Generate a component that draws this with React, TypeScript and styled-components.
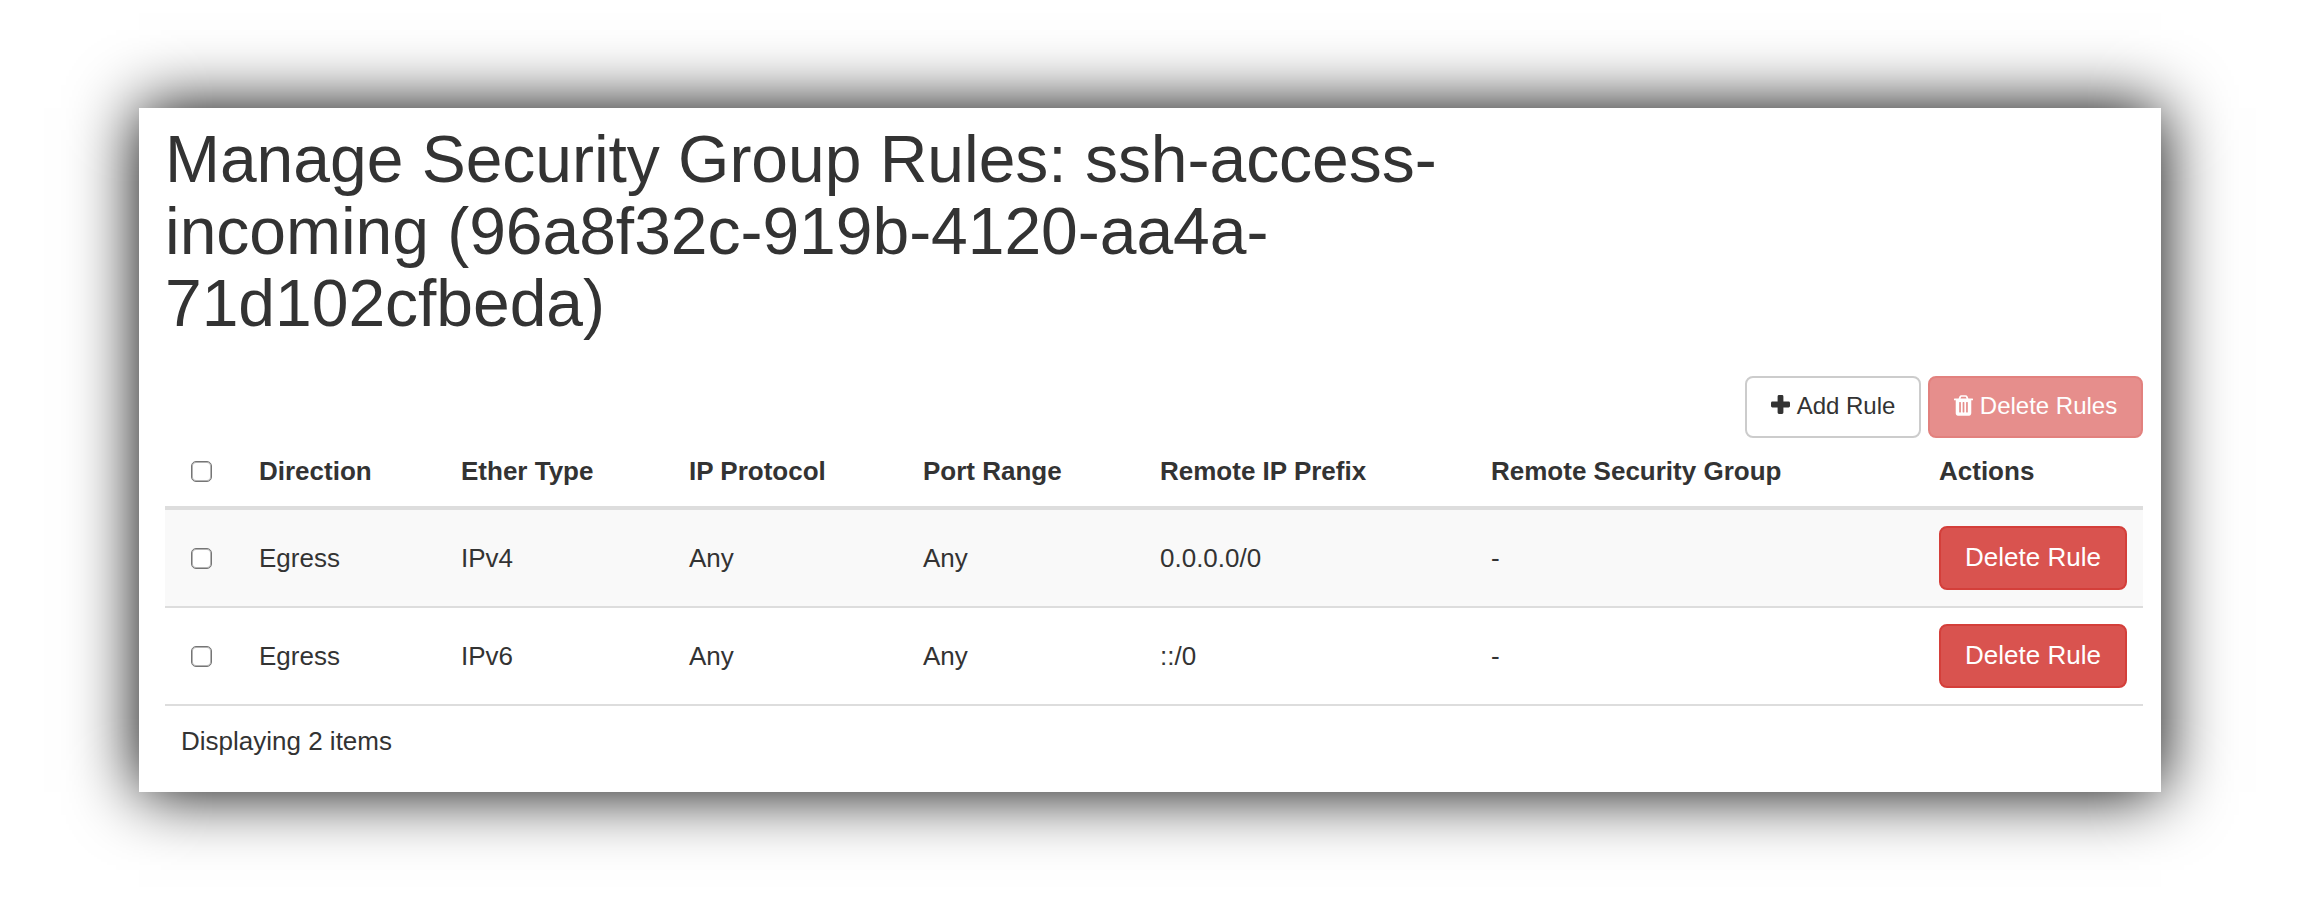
import React from 'react';
import styled, { createGlobalStyle, css } from 'styled-components';

const Global = createGlobalStyle`
  *, *::before, *::after { box-sizing: border-box; }
  html, body { margin: 0; background: #fff; }
  body {
    font-family: "Liberation Sans", Helvetica, Arial, sans-serif;
    font-size: 26px;
    line-height: 36px;
    color: #333;
  }
`;

const Page = styled.div`
  height: 900px;
  padding: 108px 139px;
  overflow: hidden;
`;

const Panel = styled.main`
  height: 684px;
  padding: 15px 18px 0 26px;
  background: #fff;
  box-shadow: 0 0 64px #000;
`;

const Title = styled.h1`
  width: 1320px;
  margin: 0;
  font-size: 66px;
  font-weight: 400;
  line-height: 72px;
  letter-spacing: -0.03px;
`;

const Toolbar = styled.div`
  display: flex;
  justify-content: flex-end;
  gap: 7px;
  height: 62px;
  margin-top: 37px;
`;

const danger = css`
  color: #fff;
  background: #d9534f;
  border-color: #d43f3a;
`;

const Button = styled.button<{ $danger?: boolean; $width: number; $height: number }>`
  display: flex;
  align-items: center;
  justify-content: center;
  gap: 7px;
  width: ${(p) => p.$width}px;
  height: ${(p) => p.$height}px;
  padding: 0 0 3px;
  font: inherit;
  font-size: ${(p) => (p.$height > 62 ? 26 : 24)}px;
  white-space: nowrap;
  color: #333;
  background: #fff;
  border: 2px solid #ccc;
  border-radius: 8px;
  ${(p) => p.$danger && danger}
  &:disabled { opacity: 0.65; }
`;

const Table = styled.table`
  width: 1978px;
  table-layout: fixed;
  border-collapse: separate;
  border-spacing: 0;
`;

const HeadCell = styled.th`
  height: 72px;
  padding: 0 16px 2px;
  text-align: left;
  font-weight: 700;
  white-space: nowrap;
  border-bottom: 4px solid #ddd;
`;

const Row = styled.tr<{ $striped: boolean }>`
  background: ${(p) => (p.$striped ? '#f9f9f9' : '#fff')};
`;

const Cell = styled.td`
  height: 98px;
  padding: 0 16px;
  white-space: nowrap;
  border-bottom: 2px solid #ddd;
`;

const Check = styled.input`
  display: block;
  appearance: none;
  width: 21px;
  height: 21px;
  margin: 0 0 0 10px;
  background: #fff;
  border: 1px solid #757575;
  border-radius: 5px;
  box-shadow: inset 0 0 0 1px #b4b4b4;
`;

const Footer = styled.footer`
  padding: 17px 16px;
`;

const PlusIcon = () => (
  <svg width="19" height="21" viewBox="0 0 19 21" fill="currentColor">
    <path d="M8 0h3q1.4 0 1.4 1.4v5.2h5.2q1.4 0 1.4 1.4v3q0 1.4-1.4 1.4h-5.2v5.2q0 1.4-1.4 1.4h-3q-1.4 0-1.4-1.4v-5.2h-5.2q-1.4 0-1.4-1.4v-3q0-1.4 1.4-1.4h5.2v-5.2q0-1.4 1.4-1.4z" />
  </svg>
);

const TrashIcon = () => (
  <svg width="19" height="21" viewBox="0 0 1408 1536" fill="currentColor">
    <path d="M512 1248V544q0-14-9-23t-23-9h-64q-14 0-23 9t-9 23v704q0 14 9 23t23 9h64q14 0 23-9t9-23zm256 0V544q0-14-9-23t-23-9h-64q-14 0-23 9t-9 23v704q0 14 9 23t23 9h64q14 0 23-9t9-23zm256 0V544q0-14-9-23t-23-9h-64q-14 0-23 9t-9 23v704q0 14 9 23t23 9h64q14 0 23-9t9-23zM480 256h448l-48-117q-7-9-17-11H546q-10 2-17 11zm928 32v64q0 14-9 23t-23 9h-96v948q0 83-47 143.500t-113 60.500H288q-66 0-113-58.500T128 1336V384H32q-14 0-23-9t-9-23v-64q0-14 9-23t23-9h309l70-167q15-37 54-63t79-26h320q40 0 79 26t54 63l70 167h309q14 0 23 9t9 23z" />
  </svg>
);

const columnWidths = [78, 202, 228, 234, 237, 331, 448, 220];
const headings = ['Direction', 'Ether Type', 'IP Protocol', 'Port Range', 'Remote IP Prefix', 'Remote Security Group', 'Actions'];
const rules = [
  ['Egress', 'IPv4', 'Any', 'Any', '0.0.0.0/0', '-'],
  ['Egress', 'IPv6', 'Any', 'Any', '::/0', '-'],
];

export default function App() {
  return (
    <>
      <Global />
      <Page>
        <Panel>
          <Title>Manage Security Group Rules: ssh-access-incoming (96a8f32c-919b-4120-aa4a-71d102cfbeda)</Title>
          <Toolbar>
            <Button $width={176} $height={62}><PlusIcon />Add Rule</Button>
            <Button $danger $width={215} $height={62} disabled><TrashIcon />Delete Rules</Button>
          </Toolbar>
          <Table>
            <colgroup>
              {columnWidths.map((w, i) => <col key={i} width={w} />)}
            </colgroup>
            <thead>
              <tr>
                <HeadCell><Check type="checkbox" /></HeadCell>
                {headings.map((h) => <HeadCell key={h}>{h}</HeadCell>)}
              </tr>
            </thead>
            <tbody>
              {rules.map((rule, i) => (
                <Row key={i} $striped={i % 2 === 0}>
                  <Cell><Check type="checkbox" /></Cell>
                  {rule.map((value, j) => <Cell key={j}>{value}</Cell>)}
                  <Cell><Button $danger $width={188} $height={64}>Delete Rule</Button></Cell>
                </Row>
              ))}
            </tbody>
          </Table>
          <Footer>Displaying 2 items</Footer>
        </Panel>
      </Page>
    </>
  );
}
